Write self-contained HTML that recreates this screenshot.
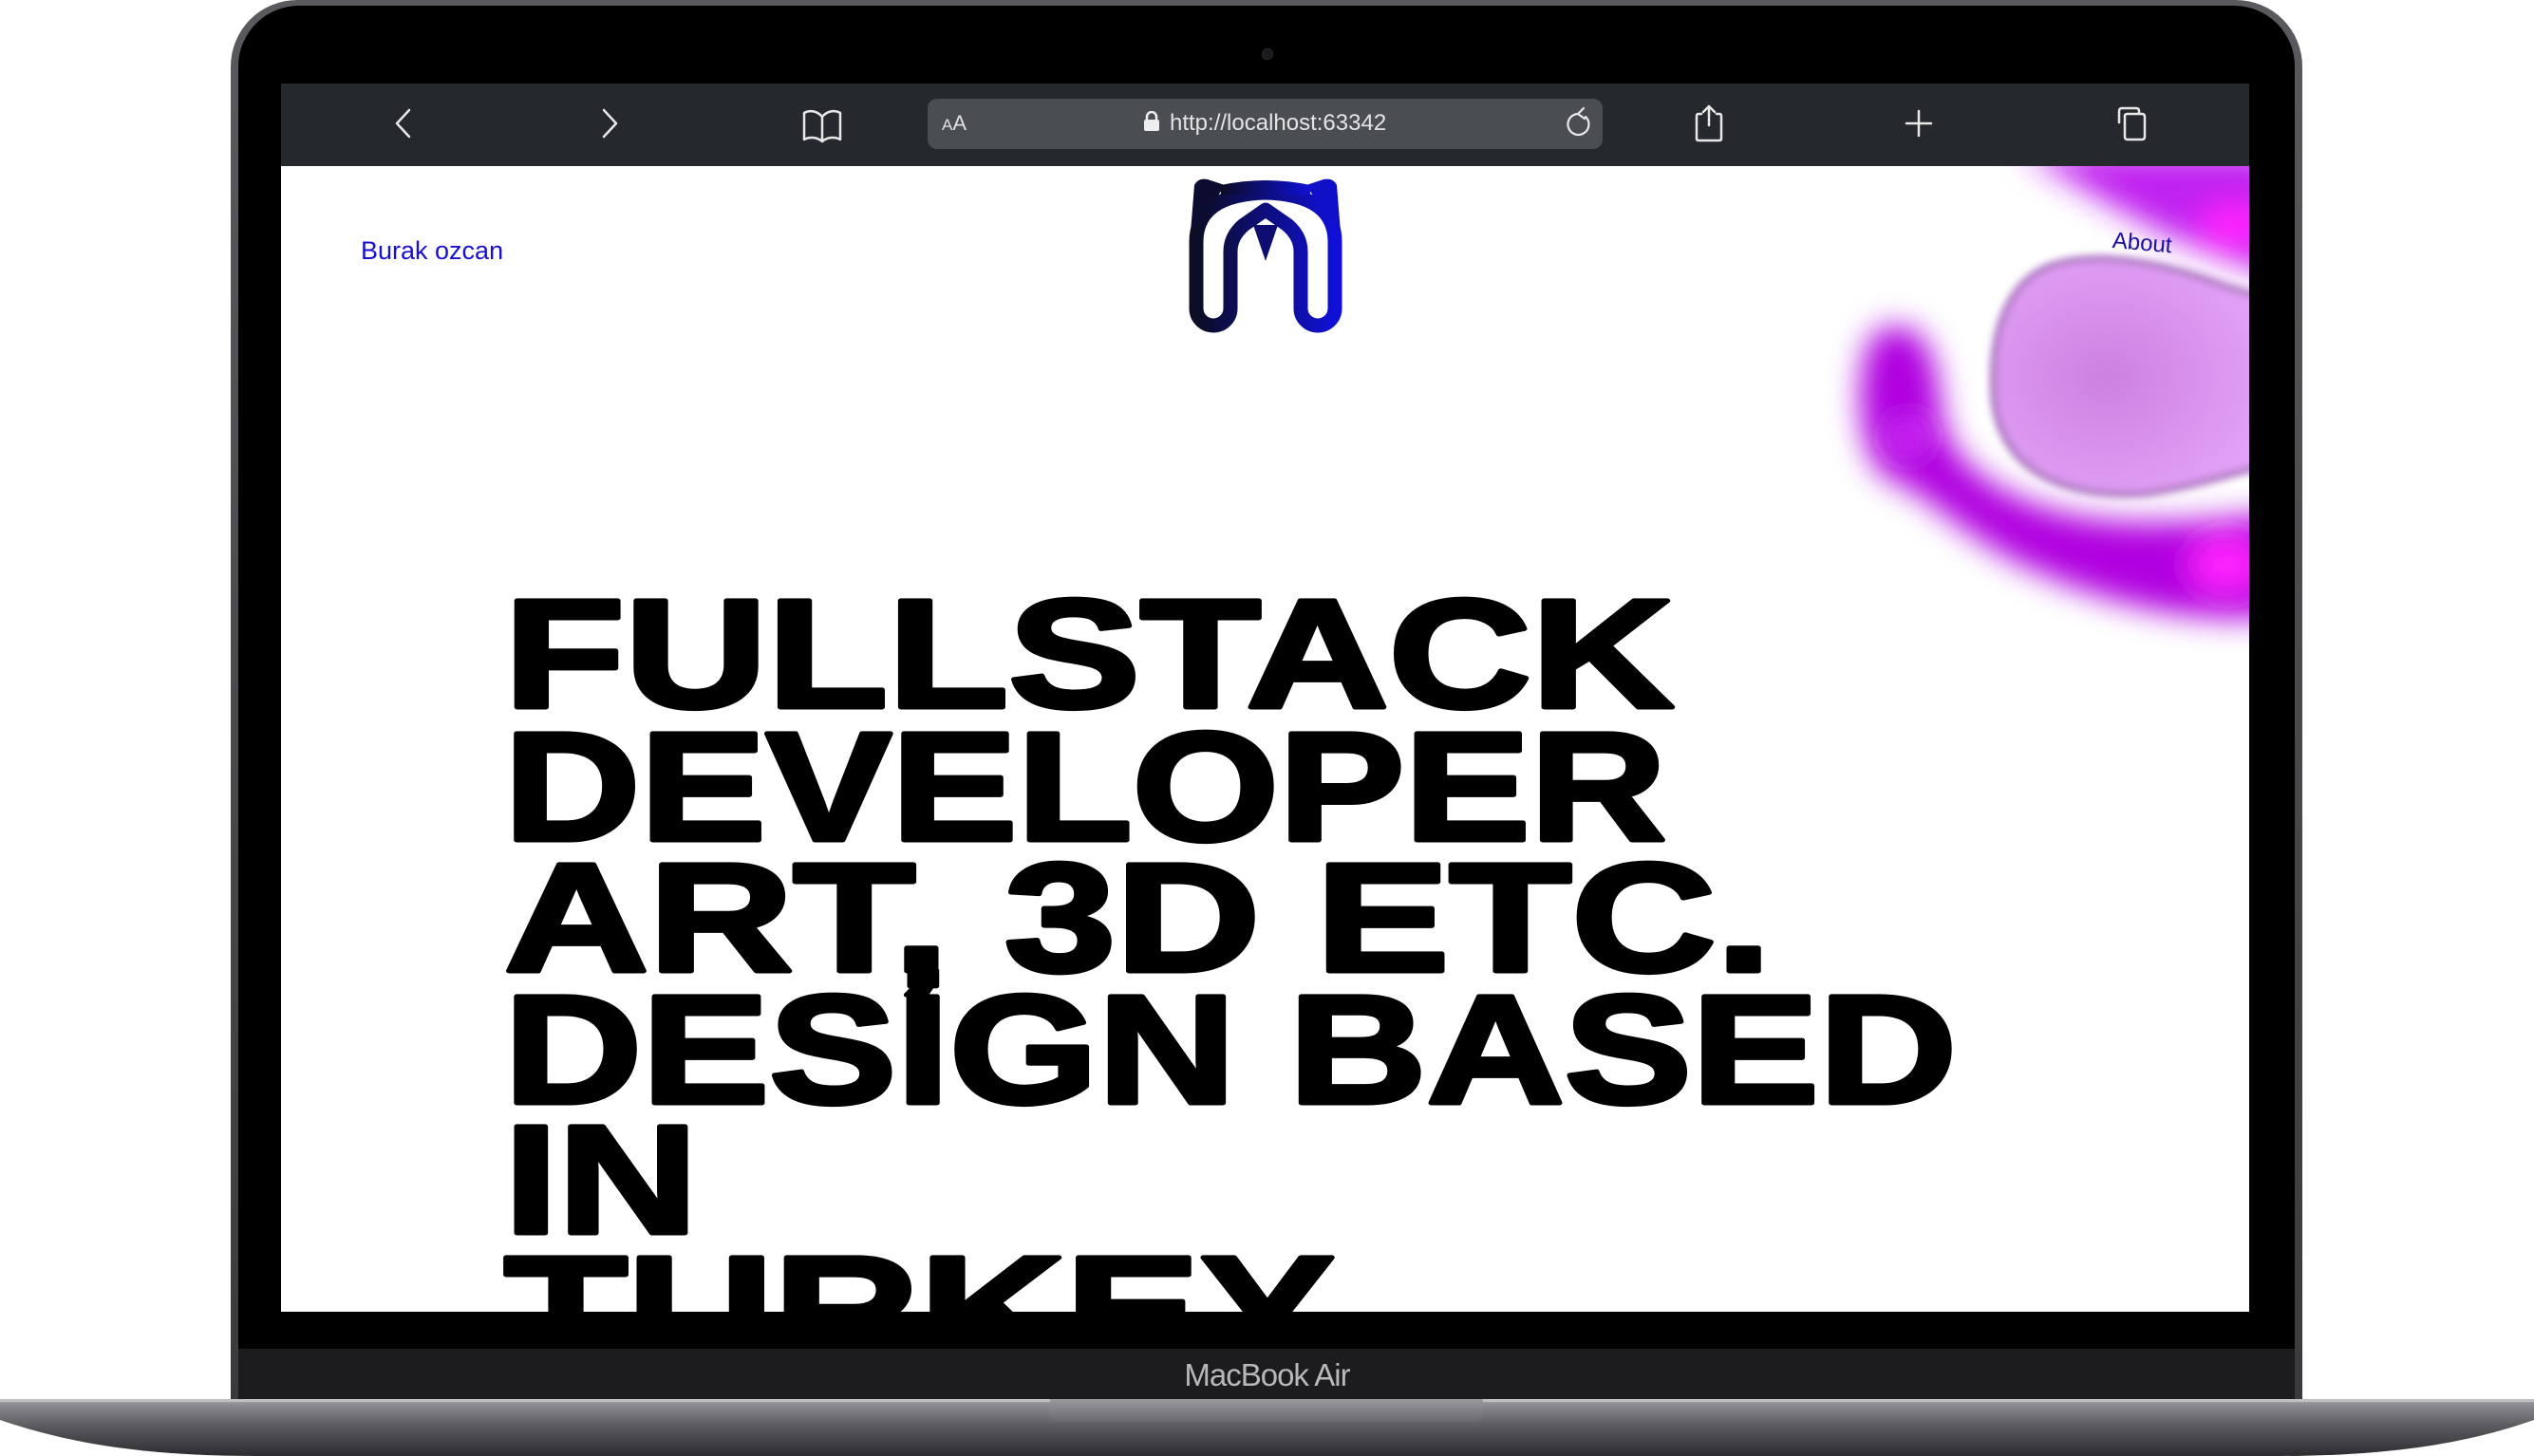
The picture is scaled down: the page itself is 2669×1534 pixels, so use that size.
<!DOCTYPE html>
<html><head><meta charset="utf-8"><style>
html,body{margin:0;padding:0;background:#fff;}
body{width:2669px;height:1534px;position:relative;overflow:hidden;font-family:"Liberation Sans",sans-serif;}
.abs{position:absolute;}
</style></head><body>
<div class="abs" style="left:243px;top:0;width:2182px;height:1490px;border-radius:70px 70px 0 0;background:linear-gradient(#5a5a5e,#3a3a3c);"></div>
<div class="abs" style="left:251px;top:6px;width:2166px;height:1480px;border-radius:64px 64px 0 0;background:#000;"></div>
<div class="abs" style="left:251px;top:1421px;width:2166px;height:60px;background:#1c1c1e;"></div>
<div class="abs" style="left:0;top:1430px;width:2669px;text-align:center;color:#b8b8bc;font-size:33px;letter-spacing:-1px;">MacBook Air</div>
<div class="abs" style="left:1329px;top:51px;width:10px;height:10px;border-radius:50%;background:#1a1a1e;border:1px solid #2a2a30;"></div>
<svg class="abs" style="left:0;top:1470px" width="2669" height="64" viewBox="0 0 2669 64">
<defs><linearGradient id="bg" x1="0" y1="0" x2="0" y2="1"><stop offset="0" stop-color="#a4a4a8"/><stop offset="0.12" stop-color="#8a8a8e"/><stop offset="0.45" stop-color="#5e5e62"/><stop offset="1" stop-color="#2c2c30"/></linearGradient>
<linearGradient id="ng" x1="0" y1="0" x2="0" y2="1"><stop offset="0" stop-color="#9a9a9e"/><stop offset="1" stop-color="#6a6a6e"/></linearGradient></defs>
<path d="M0 4 L2669 4 L2669 26 C2600 50 2520 64 2400 64 L269 64 C150 64 70 50 0 26 Z" fill="url(#bg)"/>
<rect x="0" y="4" width="2669" height="3" fill="#c0c0c4"/>
<path d="M1106 4 L1562 4 L1562 20 Q1562 28 1550 28 L1118 28 Q1106 28 1106 20 Z" fill="url(#ng)"/>
</svg>
<div class="abs" style="left:296px;top:88px;width:2073px;height:87px;background:#25292d;"></div>
<div class="abs" style="left:977px;top:104px;width:711px;height:53px;border-radius:10px;background:#4a4d52;"></div>
<svg class="abs" style="left:296px;top:88px" width="2073" height="87" viewBox="296 88 2073 87" fill="none" stroke="#e8e8e8" stroke-width="2.5" stroke-linecap="round" stroke-linejoin="round">
<path d="M431 116 L418 130 L431 144"/>
<path d="M636 116 L649 130 L636 144"/>
<path d="M866 123 C860 116 852 116 847 119 L847 147 C852 144 860 144 866 149 C872 144 880 144 885 147 L885 119 C880 116 872 116 866 123 Z M866 123 L866 149"/>
<path d="M1670 123 A11 11 0 1 1 1662 120 L1668 114 M1662 120 L1669 125" stroke-width="2.2"/>
<path d="M1792 120 L1789 120 Q1787 120 1787 122 L1787 146 Q1787 148 1789 148 L1811 148 Q1813 148 1813 146 L1813 122 Q1813 120 1811 120 L1808 120 M1800 132 L1800 112 M1794 118 L1800 112 L1806 118"/>
<path d="M2021 117 L2021 143 M2008 130 L2034 130"/>
<path d="M2232 129 L2232 117 Q2232 114 2235 114 L2250 114 Q2253 114 2253 117 L2253 120 M2238 122 Q2238 120 2241 120 L2256 120 Q2259 120 2259 123 L2259 144 Q2259 147 2256 147 L2241 147 Q2238 147 2238 144 Z"/>
</svg>
<div class="abs" style="left:992px;top:117px;color:#e0e0e0;font-size:22px;"><span style="font-size:17px">A</span>A</div>
<svg class="abs" style="left:1204px;top:117px" width="18" height="22"><path d="M4 9 V6 A5 5 0 0 1 14 6 V9" fill="none" stroke="#eee" stroke-width="2.5"/><rect x="1" y="9" width="16" height="12" rx="2" fill="#eee"/></svg>
<div class="abs" style="left:1232px;top:116px;color:#e4e4e4;font-size:24px;">http://localhost:63342</div>

<div class="abs" style="left:296px;top:175px;width:2073px;height:1207px;background:#fff;overflow:hidden;">
<svg class="abs" style="left:0;top:0" width="2073" height="1207" viewBox="296 175 2073 1207">
<defs>
<filter id="b1" x="-50%" y="-50%" width="200%" height="200%"><feGaussianBlur stdDeviation="16"/></filter>
<filter id="b2" x="-50%" y="-50%" width="200%" height="200%"><feGaussianBlur stdDeviation="4"/></filter>
<radialGradient id="lil" cx="0.4" cy="0.5" r="0.6"><stop offset="0" stop-color="#cc80e0"/><stop offset="1" stop-color="#e4a2f8"/></radialGradient>
<linearGradient id="lg" x1="0" y1="0" x2="1" y2="0"><stop offset="0" stop-color="#0c0c24"/><stop offset="1" stop-color="#1010d8"/></linearGradient>
</defs>
<g filter="url(#b1)">
<path d="M2130 160 C2200 200 2280 260 2400 290 L2400 160 Z" fill="#c020f0"/>
<ellipse cx="2355" cy="237" rx="40" ry="24" fill="#ff20ff"/>
<path d="M1985 345 C2030 335 2040 380 2045 430 C2050 470 2070 490 2100 510 C2180 560 2280 555 2400 540 L2400 650 C2300 660 2200 630 2120 590 C2050 550 2030 520 1990 505 C1950 485 1950 355 1985 345 Z" fill="#b000e0"/>
<ellipse cx="2010" cy="460" rx="16" ry="18" fill="#d830ff"/>
<ellipse cx="2345" cy="595" rx="40" ry="30" fill="#ff20ff"/>
</g>
<g filter="url(#b2)">
<path d="M2160 280 C2220 260 2300 285 2340 300 C2370 310 2390 315 2400 315 L2400 490 C2370 490 2330 510 2260 520 C2180 525 2108 500 2100 420 C2095 340 2120 295 2160 280 Z" fill="url(#lil)" stroke="#b47ec8" stroke-width="8"/>
</g>
<g fill="#000" stroke="#000" stroke-width="5" stroke-linejoin="round" font-family="Liberation Sans, Noto Sans CJK SC, sans-serif" font-weight="bold" font-size="163">
<text x="531" y="745" textLength="1232" lengthAdjust="spacingAndGlyphs">FULLSTACK</text>
<text x="531" y="885" textLength="1224" lengthAdjust="spacingAndGlyphs">DEVELOPER</text>
<text x="531" y="1023" textLength="1335" lengthAdjust="spacingAndGlyphs">ART, 3D ETC.</text>
<text x="531" y="1162" textLength="1530" lengthAdjust="spacingAndGlyphs">DESİGN BASED</text>
<text x="531" y="1299" textLength="204" lengthAdjust="spacingAndGlyphs">IN</text>
<text x="531" y="1437" textLength="875" lengthAdjust="spacingAndGlyphs">TURKEY</text>
</g>
<g transform="translate(1230 175)">
<path d="M66 150 L66 90 Q66 74 80 62 L103 46 L126 62 Q140 74 140 90 L140 150 A18 18 0 0 0 176 150 L176 80 Q176 30 103 28 Q30 30 30 80 L30 150 A18 18 0 0 0 66 150 Z" fill="none" stroke="url(#lg)" stroke-width="15" stroke-linejoin="round"/>
<path d="M90 62 L116 62 L103 100 Z" fill="#0e0e70"/>
<path d="M24 70 L28 20 Q32 12 42 14 L60 20 L50 36 Z" fill="#0c0c30"/>
<path d="M182 70 L178 20 Q174 12 164 14 L146 20 L156 36 Z" fill="#1010c8"/>
<path d="M56 20 Q103 10 150 20 L150 30 L56 30 Z" fill="url(#lg)"/>
</g>
<text x="380" y="273" font-family="Liberation Sans, sans-serif" font-size="27" fill="#1a10d0">Burak ozcan</text>
<text x="2225" y="264" font-family="Liberation Sans, sans-serif" font-size="24" fill="#1a10a0" transform="rotate(5 2260 255)">About</text>
</svg>
</div>
</body></html>
